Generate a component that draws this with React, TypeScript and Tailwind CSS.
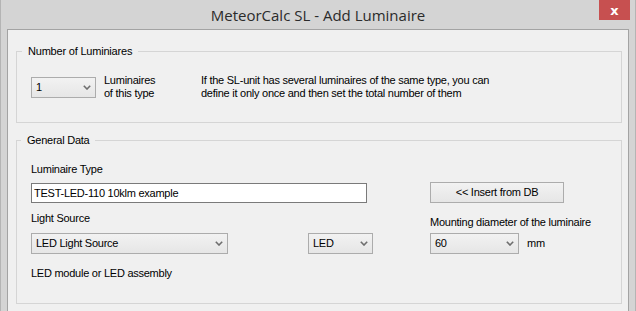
import React from "react";

function Chevron() {
  return (
    <svg width="8" height="5" viewBox="0 0 8 5" className="shrink-0">
      <polyline points="0.8,0.8 4,4 7.2,0.8" fill="none" stroke="#6e6e6e" strokeWidth="1.6" />
    </svg>
  );
}

function Combo({ value, width }: { value: string; width: string }) {
  return (
    <div
      className={`${width} h-[21px] flex items-center justify-between pl-[4px] pr-[4px] border border-[#acacac] bg-gradient-to-b from-[#f2f2f2] to-[#e6e6e6]`}
    >
      <span>{value}</span>
      <Chevron />
    </div>
  );
}

export default function App() {
  return (
    <div className="w-[636px] h-[311px] overflow-hidden bg-[#d4d4d4] border-x border-[#b4b4b4] flex flex-col font-['Liberation_Sans',Arial,sans-serif] text-[11px] leading-[13px] tracking-[-0.25px] text-black">
      {/* Title bar */}
      <div className="h-[29px] shrink-0 relative flex items-start justify-center">
        <span className="mt-[5px] font-['Open_Sans',sans-serif] text-[15px] leading-[20px] tracking-normal text-[#2b2b2b]">
          MeteorCalc SL - Add Luminaire
        </span>
        <div className="absolute right-[5px] top-0 w-[31px] h-[20px] bg-[#c75050] flex items-center justify-center">
          <span className="text-white font-bold text-[13px] leading-[13px] font-['DejaVu_Sans',sans-serif] tracking-normal">x</span>
        </div>
      </div>

      {/* Client area */}
      <div className="mx-[6px] flex-1 border-x border-t border-[#a3a3a3] bg-[#f0f0f0] pt-[15px] pl-[8px] pr-[6px]">
        {/* Number of Luminaires */}
        <fieldset className="border border-[#d5d5d5] pl-[14px] pt-[16px] pb-[22px]">
          <legend className="-ml-[9px] px-[6px] tracking-[-0.2px]">Number of Luminiares</legend>
          <div className="flex items-center">
            <Combo value="1" width="w-[65px]" />
            <div className="ml-[8px] w-[97px]">
              Luminaires
              <br />
              of this type
            </div>
            <div>
              If the SL-unit has several luminaires of the same type, you can
              <br />
              define it only once and then set the total number of them
            </div>
          </div>
        </fieldset>

        {/* General Data */}
        <fieldset className="mt-[11px] border border-[#d5d5d5] pl-[14px] pt-[16px] pb-[23px]">
          <legend className="-ml-[10px] px-[6px]">General Data</legend>
          <div>Luminaire Type</div>
          <div className="mt-[6px] flex items-start h-[21px]">
            <div className="mt-[1px] w-[336px] h-[20px] border border-[#7a7a7a] bg-white pl-[2px] flex items-center">
              TEST-LED-110 10klm example
            </div>
            <div className="ml-[63px] w-[134px] h-[21px] border border-[#acacac] bg-gradient-to-b from-[#f2f2f2] to-[#e6e6e6] flex items-center justify-center">
              &lt;&lt; Insert from DB
            </div>
          </div>
          <div className="mt-[9px] flex items-start">
            <div className="w-[399px]">Light Source</div>
            <div className="mt-[4px]">Mounting diameter of the luminaire</div>
          </div>
          <div className="mt-[4px] flex items-center">
            <Combo value="LED Light Source" width="w-[197px]" />
            <div className="ml-[80px]">
              <Combo value="LED" width="w-[65px]" />
            </div>
            <div className="ml-[57px]">
              <Combo value="60" width="w-[89px]" />
            </div>
            <span className="ml-[8px]">mm</span>
          </div>
          <div className="mt-[13px]">LED module or LED assembly</div>
        </fieldset>
      </div>
    </div>
  );
}
